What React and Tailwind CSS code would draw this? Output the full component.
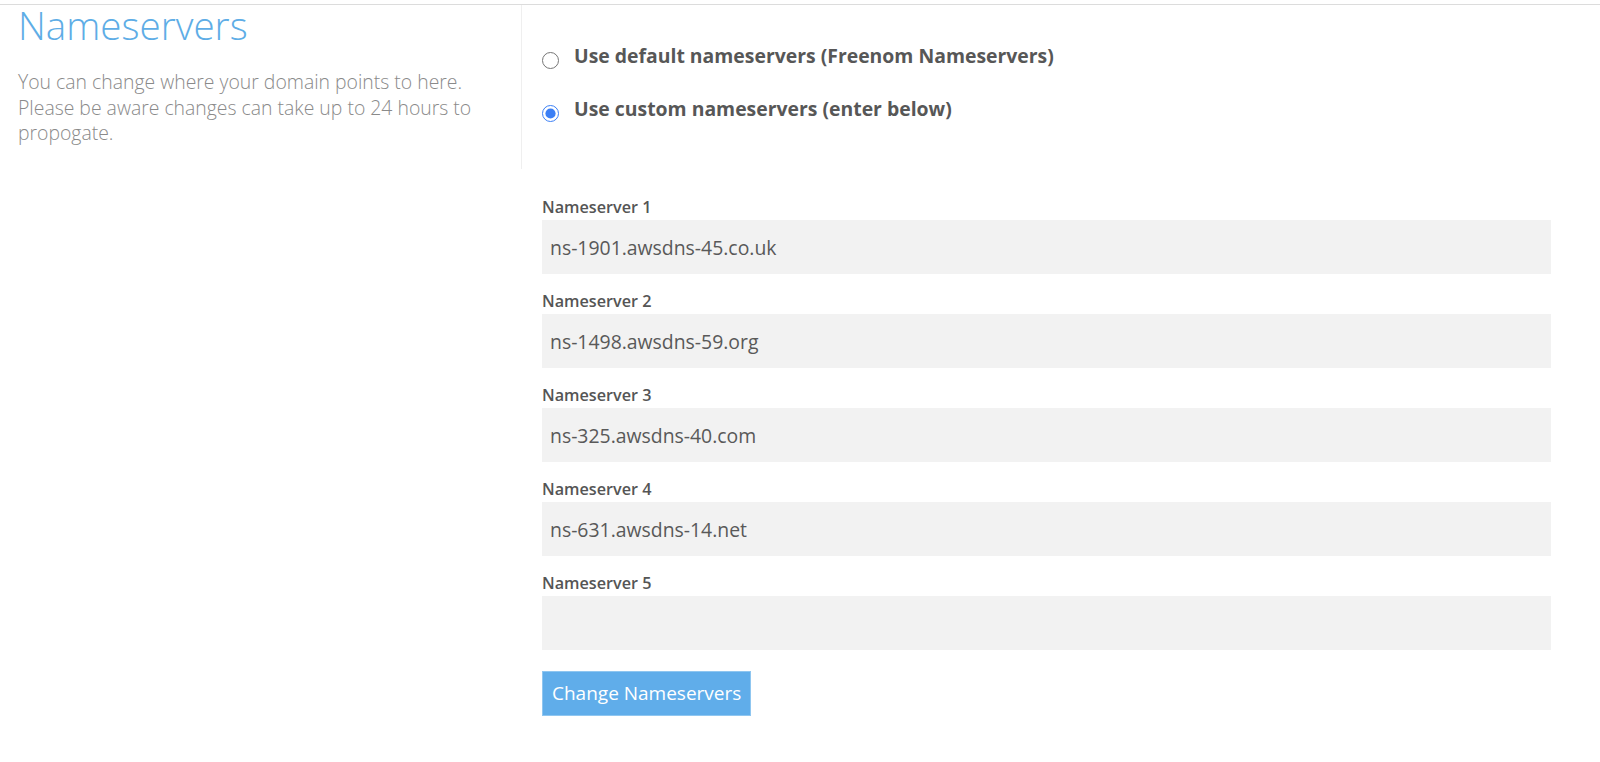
import { useState } from 'react';

const SERVERS = [
  'ns-1901.awsdns-45.co.uk',
  'ns-1498.awsdns-59.org',
  'ns-325.awsdns-40.com',
  'ns-631.awsdns-14.net',
  '',
];

export default function App() {
  const [mode, setMode] = useState('custom');
  const [values, setValues] = useState(SERVERS);

  return (
    <div className="min-h-screen bg-white pt-1 font-['Open_Sans',sans-serif]">
      <div className="border-t border-[#dcdcdc]">
        {/* Top row: intro + radios */}
        <div className="flex">
          <div className="w-[522px] h-[164px] shrink-0 border-r border-[#efefef] pl-[18px]">
            <h1 className="text-[38.6px] leading-[40px] font-light text-[#5eade6]">Nameservers</h1>
            <p className="mt-[24px] w-[480px] text-[19.4px] leading-[25.5px] font-light text-[#8a8a8a]">
              You can change where your domain points to here. Please be aware changes can take up to 24 hours to propogate.
            </p>
          </div>

          <div className="pl-[20px] pt-[38px] flex flex-col gap-[27px]">
            <label className="flex items-start gap-[15px] cursor-pointer">
              <input
                type="radio"
                name="ns"
                checked={mode === 'default'}
                onChange={() => setMode('default')}
                className="m-0 mt-[9px] w-[17px] h-[17px] accent-[#3b7ff5]"
              />
              <span className="text-[19.4px] leading-[26px] font-bold text-[#575757]">
                Use default nameservers (Freenom Nameservers)
              </span>
            </label>
            <label className="flex items-start gap-[15px] cursor-pointer">
              <input
                type="radio"
                name="ns"
                checked={mode === 'custom'}
                onChange={() => setMode('custom')}
                className="m-0 mt-[9px] w-[17px] h-[17px] accent-[#3b7ff5]"
              />
              <span className="text-[19.4px] leading-[26px] font-bold text-[#575757]">
                Use custom nameservers (enter below)
              </span>
            </label>
          </div>
        </div>

        {/* Nameserver fields */}
        <form className="ml-[542px] w-[1009px] pt-[28px]" onSubmit={e => e.preventDefault()}>
          {values.map((v, i) => (
            <div key={i} className="mb-[17px]">
              <label className="block text-[16.2px] leading-[20px] font-semibold text-[#555]">
                Nameserver {i + 1}
              </label>
              <input
                type="text"
                value={v}
                onChange={e => setValues(values.map((x, j) => (j === i ? e.target.value : x)))}
                className="mt-[3px] block w-full h-[54px] bg-[#f2f2f2] px-[8px] text-[19.4px] text-[#595959] outline-none"
              />
            </div>
          ))}
          <button
            type="submit"
            className="mt-[4px] h-[45px] px-[9px] bg-[#60adea] border border-[#8fc6f0] text-[19px] text-white"
          >
            Change Nameservers
          </button>
        </form>
      </div>
    </div>
  );
}
